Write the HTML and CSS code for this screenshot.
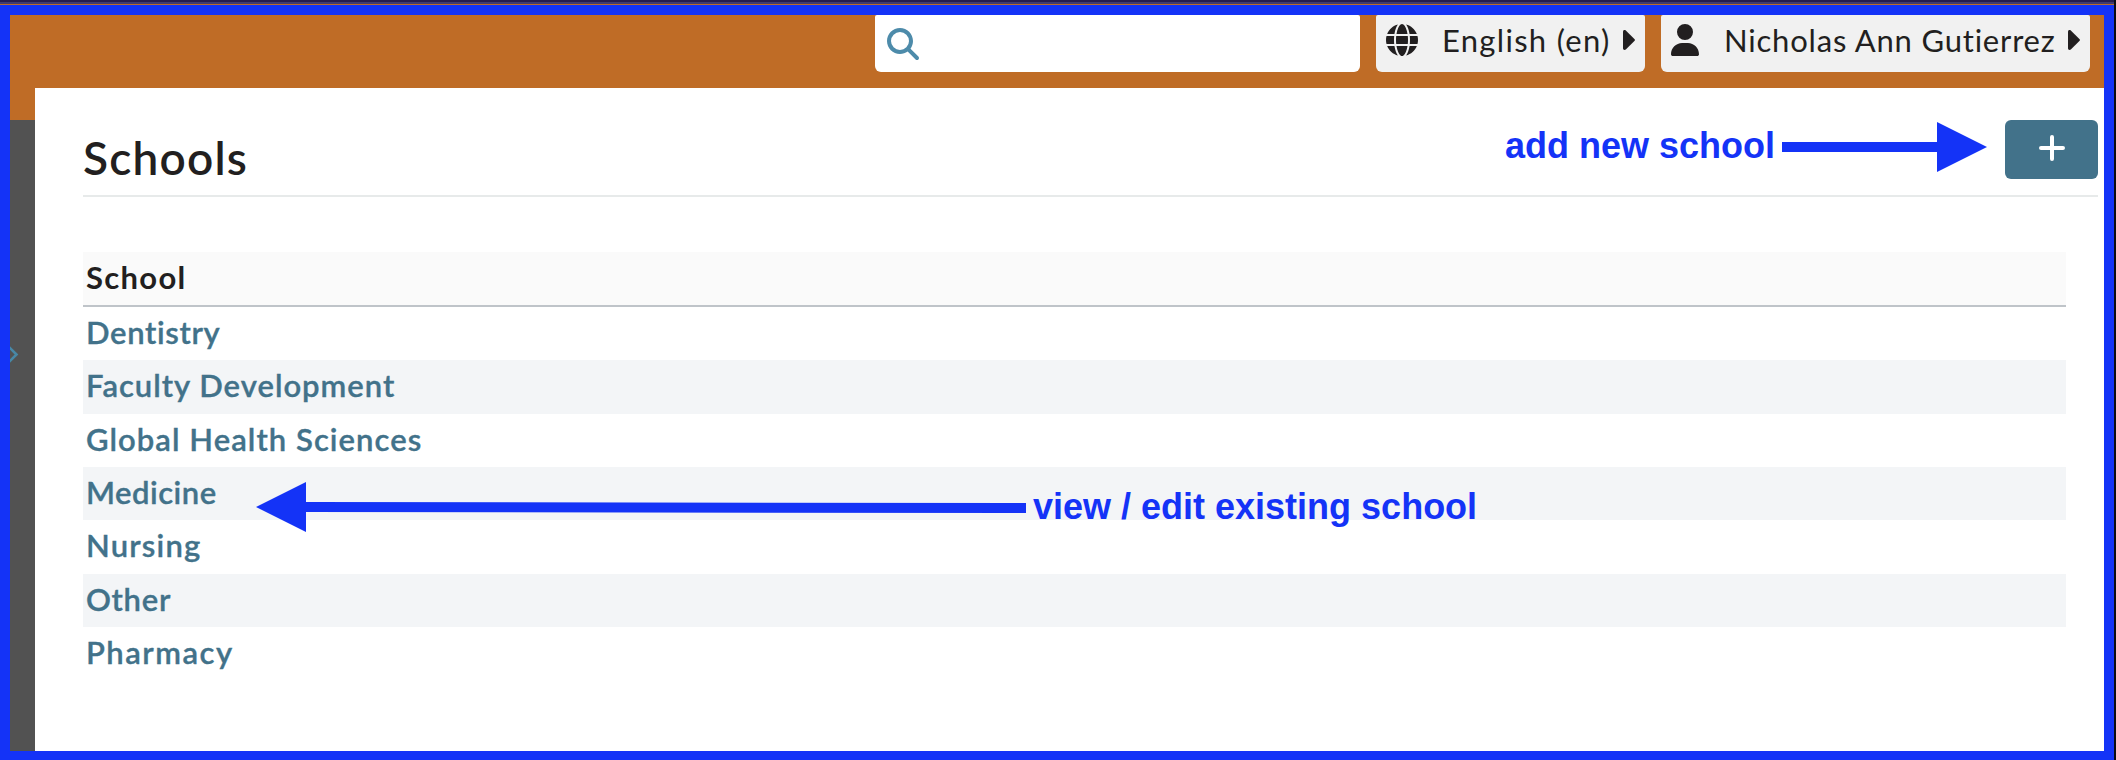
FILE: index.html
```html
<!DOCTYPE html>
<html lang="en">
<head>
<meta charset="utf-8">
<title>Schools</title>
<link rel="stylesheet" href="styles.css">
</head>
<body>
<div class="window">
  <div class="window-strip"></div>
  <div class="frame">
    <nav class="sidebar">
      <svg class="expand" viewBox="0 0 12 18"><path d="M-1 1l7.500 7.500-7.500 7.500" fill="none" stroke="#4888a6" stroke-width="2.600"/></svg>
    </nav>
    <div class="page">
      <header class="topbar">
        <div class="search">
          <svg class="icon-search" viewBox="0 0 512 512"><path d="M416 208c0 45.900-14.900 88.300-40 122.700L502.600 457.400c12.500 12.500 12.500 32.800 0 45.300s-32.800 12.500-45.300 0L330.700 376c-34.400 25.200-76.800 40-122.700 40C93.100 416 0 322.900 0 208S93.100 0 208 0S416 93.100 416 208zM208 352a144 144 0 1 0 0-288 144 144 0 1 0 0 288z"/></svg>
        </div>
        <button class="menu menu-lang">
          <svg class="icon-globe" viewBox="0 0 512 512"><path d="M352 256c0 22.200-1.200 43.600-3.300 64H163.300c-2.200-20.400-3.300-41.800-3.300-64s1.200-43.600 3.300-64H348.700c2.200 20.400 3.300 41.800 3.300 64zm28.800-64H503.900c5.300 20.500 8.100 41.900 8.100 64s-2.800 43.500-8.100 64H380.800c2.100-20.600 3.200-42 3.200-64s-1.100-43.400-3.200-64zm112.600-32H376.700c-10-63.900-29.800-117.400-55.300-151.600c78.300 20.700 142 77.500 171.900 151.600zm-149.100 0H167.700c6.100-36.400 15.500-68.600 27-94.700c10.500-23.600 22.200-40.700 33.500-51.500C239.400 3.200 248.700 0 256 0s16.600 3.200 27.800 13.800c11.300 10.800 23 27.900 33.500 51.500c11.600 26 20.900 58.200 27 94.700zm-209 0H18.600C48.600 85.900 112.200 29.100 190.600 8.400C165.100 42.600 145.300 96.100 135.300 160zM8.100 192H131.200c-2.100 20.600-3.200 42-3.200 64s1.100 43.400 3.200 64H8.100C2.800 299.500 0 278.100 0 256s2.800-43.500 8.100-64zM194.700 446.600c-11.600-26-20.900-58.200-27-94.600H344.300c-6.100 36.400-15.500 68.600-27 94.600c-10.500 23.600-22.200 40.700-33.500 51.500C272.600 508.800 263.300 512 256 512s-16.600-3.200-27.800-13.800c-11.300-10.800-23-27.900-33.500-51.500zM135.300 352c10 63.900 29.800 117.400 55.300 151.600C112.200 482.900 48.600 426.100 18.600 352H135.300zm358.100 0c-30 74.100-93.600 130.900-171.900 151.600c25.500-34.200 45.200-87.700 55.300-151.600H493.400z"/></svg>
          <span class="label-lang">English (en)</span>
          <svg class="caret" viewBox="0 0 12 20"><path d="M0 1.800C0 .2 1.600-.4 2.800.6L11.400 8.900Q12.500 10 11.400 11.100L2.800 19.400C1.600 20.400 0 19.800 0 18.200z"/></svg>
        </button>
        <button class="menu menu-user">
          <svg class="icon-user" viewBox="0 0 448 512"><path d="M224 256A128 128 0 1 0 224 0a128 128 0 1 0 0 256zm-45.700 48C79.800 304 0 383.800 0 482.300C0 498.700 13.300 512 29.700 512H418.300c16.400 0 29.700-13.300 29.700-29.700C448 383.800 368.200 304 269.700 304H178.300z"/></svg>
          <span class="label-user">Nicholas Ann Gutierrez</span>
          <svg class="caret" viewBox="0 0 12 20"><path d="M0 1.800C0 .2 1.600-.4 2.800.6L11.400 8.900Q12.500 10 11.400 11.100L2.800 19.400C1.600 20.400 0 19.800 0 18.200z"/></svg>
        </button>
      </header>
      <main class="content">
        <div class="title-row">
          <h1>Schools</h1>
          <button class="add" aria-label="Add school"><svg viewBox="0 0 26 26"><path d="M13 2v22M2 13h22" stroke="#fff" stroke-width="4" stroke-linecap="round"/></svg></button>
        </div>
        <div class="table">
          <div class="head"><span class="w-school">School</span></div>
          <a class="row"><span class="w-dentistry">Dentistry</span></a>
          <a class="row"><span class="w-faculty">Faculty Development</span></a>
          <a class="row"><span class="w-global">Global Health Sciences</span></a>
          <a class="row"><span class="w-medicine">Medicine</span></a>
          <a class="row"><span class="w-nursing">Nursing</span></a>
          <a class="row"><span class="w-other">Other</span></a>
          <a class="row"><span class="w-pharmacy">Pharmacy</span></a>
        </div>
      </main>
    </div>
  </div>
</div>
<div class="note note-add">add new school</div>
<svg class="arrow arrow-add" viewBox="0 0 205 50"><path d="M0 20H155V0L205 25L155 50V30H0z"/></svg>
<div class="note note-edit">view / edit existing school</div>
<svg class="arrow arrow-edit" viewBox="0 0 770 50"><path d="M0 25L50 0V20L770 21V31L50 30V50z"/></svg>
</body>
</html>
```
FILE: styles.css
```css
* { box-sizing: border-box; }
body { margin: 0; width: 2116px; height: 760px; overflow: hidden; position: relative; font-family: Lato, "Open Sans", sans-serif; font-variant-ligatures: none; color: #221f20; background: #fff; }
button { border: 0; font: inherit; color: inherit; font-variant-ligatures: none; }
svg { display: block; flex: none; }
span { white-space: nowrap; }
.window { height: 760px; padding-right: 2px; background: #0b0b12; display: flex; flex-direction: column; }
.window-strip { height: 5px; flex: none; background: linear-gradient(#261d4f 0 2px, #413b70 2px 4px, #bf6c26 4px); }
.frame { flex: 1; border: 10px solid #1433f7; border-bottom-width: 9px; display: flex; background: #fff; }
.sidebar { width: 25px; flex: none; background: linear-gradient(#bf6c26 0 105px, #525252 105px); padding-top: 331px; }
.expand { width: 12px; height: 18px; }
.page { flex: 1; min-width: 0; }
.topbar { height: 73px; background: #bf6c26; display: flex; justify-content: flex-end; gap: 16px; padding-right: 14px; }
.search { width: 485px; height: 57px; background: #fff; border-radius: 2px 2px 6px 6px; padding: 13px 12px; }
.icon-search { width: 32px; height: 32px; fill: #4d8baa; }
.menu { height: 57px; background: #f1f1f1; border-radius: 2px 2px 6px 6px; display: flex; align-items: flex-start; padding: 0 10px; font-size: 31px; fill: #221f20; }
.menu span { line-height: 38px; padding-top: 6px; text-align: left; }
.menu-lang { width: 269px; }
.menu-user { width: 429px; }
.icon-globe { width: 32px; height: 32px; margin-top: 9px; }
.icon-user { width: 28px; height: 32px; margin-top: 9px; }
.caret { width: 12px; height: 20px; margin-top: 15px; }
.menu .label-lang { width: 181px; margin-left: 24px; letter-spacing: 1.3px; }
.menu .label-user { width: 344px; margin-left: 25px; letter-spacing: .8px; }
.content { padding: 32px 6px 0 48px; }
.title-row { height: 77px; border-bottom: 2px solid #e7eaea; display: flex; justify-content: space-between; }
h1 { margin: 0; padding-top: 9px; font-size: 46px; line-height: 58px; font-weight: 600; letter-spacing: 1.2px; }
.add { width: 93px; height: 59px; border-radius: 6px; background: #42728a; padding: 0; display: grid; place-items: center; }
.add svg { width: 26px; height: 26px; margin-top: -3px; }
.table { width: 1983px; margin-top: 55px; font-size: 31px; font-weight: 600; color: #42728a; display: grid; grid-template-rows: 55px repeat(7, 53.333px); }
.head { background: #fafafa; border-bottom: 2px solid #bfc4c9; color: #221f20; font-weight: 700; }
.head, .row { padding: 6px 3px 0; line-height: 38px; }
.row:nth-child(odd) { background: #f3f5f7; }
.row span { -webkit-text-stroke: .35px #42728a; }
.w-school { letter-spacing: 1.3px; }
.w-dentistry { letter-spacing: .65px; }
.w-faculty { letter-spacing: 1px; }
.w-global { letter-spacing: 1.05px; }
.w-medicine { letter-spacing: .5px; }
.w-nursing { letter-spacing: 1.2px; }
.w-other { letter-spacing: .7px; }
.w-pharmacy { letter-spacing: 1.5px; }
.note { position: absolute; font: bold 36px/42px "Liberation Sans", Arial, sans-serif; color: #1433f7; white-space: nowrap; }
.note-add { left: 1505px; top: 125px; }
.note-edit { left: 1033px; top: 486px; }
.arrow { position: absolute; fill: #1433f7; height: 50px; }
.arrow-add { left: 1782px; top: 122px; width: 205px; }
.arrow-edit { left: 256px; top: 482px; width: 770px; }
```
